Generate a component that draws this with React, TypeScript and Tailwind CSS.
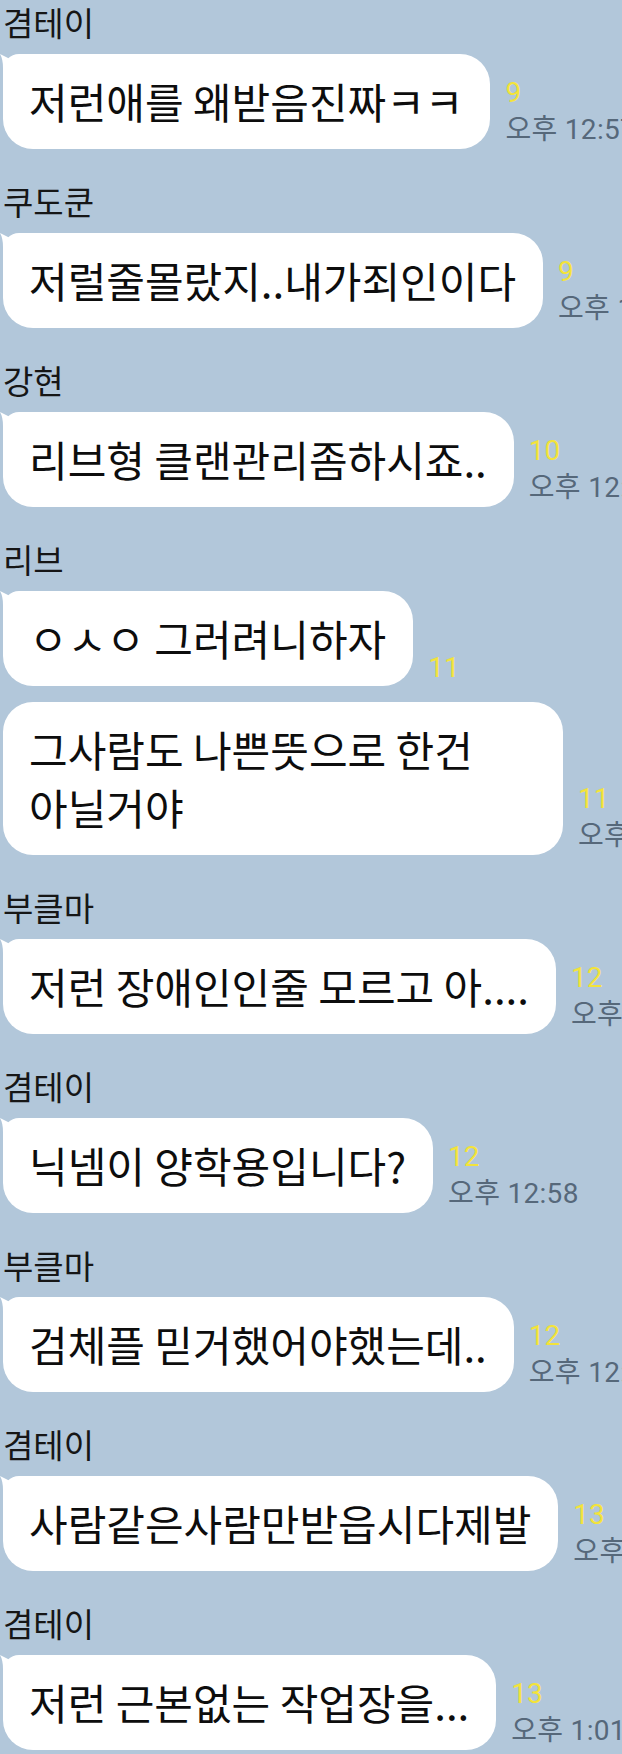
type Msg = { text: string; read: string; time?: string };
type Group = { name: string; msgs: Msg[] };

const groups: Group[] = [
  { name: "겸테이", msgs: [{ text: "저런애를 왜받음진짜ㅋㅋ", read: "9", time: "오후 12:57" }] },
  { name: "쿠도쿤", msgs: [{ text: "저럴줄몰랐지..내가죄인이다", read: "9", time: "오후 12:57" }] },
  { name: "강현", msgs: [{ text: "리브형 클랜관리좀하시죠..", read: "10", time: "오후 12:57" }] },
  {
    name: "리브",
    msgs: [
      { text: "ㅇㅅㅇ 그러려니하자", read: "11" },
      { text: "그사람도 나쁜뜻으로 한건 아닐거야", read: "11", time: "오후 12:58" },
    ],
  },
  { name: "부클마", msgs: [{ text: "저런 장애인인줄 모르고 아....", read: "12", time: "오후 12:58" }] },
  { name: "겸테이", msgs: [{ text: "닉넴이 양학용입니다?", read: "12", time: "오후 12:58" }] },
  { name: "부클마", msgs: [{ text: "검체플 믿거했어야했는데..", read: "12", time: "오후 12:58" }] },
  { name: "겸테이", msgs: [{ text: "사람같은사람만받읍시다제발", read: "13", time: "오후 1:01" }] },
  { name: "겸테이", msgs: [{ text: "저런 근본없는 작업장을...", read: "13", time: "오후 1:01" }] },
];

function Tail() {
  return (
    <svg
      className="absolute left-[-3px] top-0"
      width="20"
      height="32"
      viewBox="0 0 20 32"
    >
      <path d="M0 0 Q7 3 14 8 L14 32 L3 32 L3 14 Q3 5 0 0 Z" fill="#ffffff" />
    </svg>
  );
}

function Row({ msg, first }: { msg: Msg; first: boolean }) {
  return (
    <div className="flex items-end">
      <div
        className={
          "relative ml-[3px] max-w-[560px] shrink-0 break-keep rounded-[30px] bg-white pl-[26px] pr-[27px] pt-[18px] pb-[19px] text-[42px] leading-[58px] text-[#0d0d0d] " +
          (first ? "rounded-tl-[16px]" : "")
        }
      >
        {first && <Tail />}
        <span className="relative">{msg.text}</span>
      </div>
      <div className="mb-[3px] ml-[15px] flex shrink-0 flex-col items-start whitespace-nowrap font-['Roboto','Noto_Sans_CJK_KR',sans-serif]">
        <span className="text-[28px] leading-[30px] text-[#f3e33a]">{msg.read}</span>
        {msg.time && (
          <span className="mt-[6px] text-[28px] leading-[32px] tracking-[0.3px] text-[#56687a]">
            {msg.time}
          </span>
        )}
      </div>
    </div>
  );
}

export default function App() {
  return (
    <div className="h-[1754px] w-[622px] overflow-hidden bg-[#b2c7da] pt-[3px] font-['Noto_Sans_CJK_KR',sans-serif]">
      <div className="flex flex-col gap-[33px]">
        {groups.map((g, i) => (
          <div key={i} className="flex flex-col">
            <div className="pl-[3px] text-[33px] leading-[38px] text-[#161616]">{g.name}</div>
            <div className="mt-[13px] flex flex-col gap-[16px]">
              {g.msgs.map((m, j) => (
                <Row key={j} msg={m} first={j === 0} />
              ))}
            </div>
          </div>
        ))}
      </div>
    </div>
  );
}
